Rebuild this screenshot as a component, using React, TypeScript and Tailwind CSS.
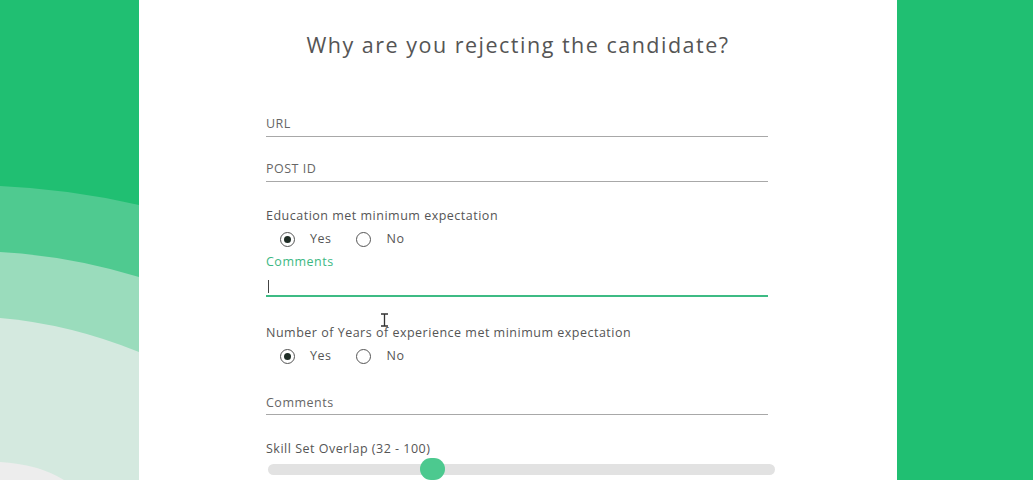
import { useState } from "react";

function Waves() {
	return (
		<svg width="139" height="480" viewBox="0 0 139 480" className="block">
			<rect width="139" height="480" fill="#20bf72" />
			<path d="M0,186 Q70,189 139,205 L139,480 L0,480 Z" fill="#4fca90" />
			<path d="M0,252 Q70,256 139,277 L139,480 L0,480 Z" fill="#9adcbc" />
			<path d="M0,318 Q70,324 139,352 L139,480 L0,480 Z" fill="#d4e9df" />
			<path d="M0,462 Q38,464 64,480 L0,480 Z" fill="#ededed" />
		</svg>
	);
}

function Radio({ checked, label }: { checked: boolean; label: string }) {
	return (
		<label className="flex items-center gap-[15px]">
			<span className="flex h-[15px] w-[15px] items-center justify-center rounded-full border-[1.5px] border-[#555]">
				{checked ? (
					<span className="h-[7px] w-[7px] rounded-full bg-[#1f2d26]" />
				) : null}
			</span>
			<span className="text-[12.5px] tracking-[0.5px] text-[#555]">{label}</span>
		</label>
	);
}

function Field({ label }: { label: string }) {
	return (
		<div className="h-[45px] pt-[8px]">
			<div className="border-b-[1.5px] border-[#a8a8a8] pb-[2px] text-[12.5px] tracking-[0.5px] text-[#666]">
				{label}
			</div>
		</div>
	);
}

function YesNo({ label }: { label: string }) {
	return (
		<div>
			<div className="text-[12.5px] leading-[18px] tracking-[0.5px] text-[#555]">
				{label}
			</div>
			<div className="mt-[5px] flex items-center gap-[25px] pl-[14px]">
				<Radio checked label="Yes" />
				<Radio checked={false} label="No" />
			</div>
		</div>
	);
}

export default function App() {
	const [skill] = useState(32);
	const thumbLeft = 152 + (skill - 32) * 0;

	return (
		<div
			className="flex h-[480px] w-[1033px] overflow-hidden bg-[#20bf72]"
			style={{ fontFamily: "'Open Sans', Lato, sans-serif" }}
		>
			<Waves />
			<div className="relative h-[480px] w-[758px] bg-white">
				<h1 className="pt-[30px] text-center text-[21.5px] leading-[30px] tracking-[1.5px] text-[#555]">
					Why are you rejecting the candidate?
				</h1>
				<div className="ml-[127px] mt-[47px] w-[502px]">
					<Field label="URL" />
					<Field label="POST ID" />
					<div className="mt-[10px]">
						<YesNo label="Education met minimum expectation" />
					</div>
					<div className="mt-[4px] text-[12.5px] leading-[18px] tracking-[0.5px] text-[#3db883]">
						Comments
					</div>
					<div className="mt-[8px] flex h-[18px] items-end border-b-2 border-[#3dbb84] pb-[2px]">
						<span className="ml-[2px] h-[13px] w-px bg-[#444]" />
					</div>
					<div className="mt-[27px]">
						<YesNo label="Number of Years of experience met minimum expectation" />
					</div>
					<div className="mt-[28px] border-b-[1.5px] border-[#a8a8a8] pb-[2px] text-[12.5px] tracking-[0.5px] text-[#666]">
						Comments
					</div>
					<div className="mt-[25px] text-[12.5px] leading-[18px] tracking-[0.5px] text-[#555]">
						Skill Set Overlap (32 - 100)
					</div>
					<div className="relative mt-[6px] ml-[2px] h-[11px] w-[507px] rounded-full bg-[#e2e2e2]">
						<span
							className="absolute top-[-6px] h-[22px] w-[25px] rounded-full bg-[#4cc98f]"
							style={{ left: thumbLeft }}
						/>
					</div>
				</div>
				<svg
					className="absolute left-[241px] top-[313px]"
					width="9"
					height="14"
					viewBox="0 0 9 14"
				>
					<path
						d="M1,1 H8 M4.5,1 V13 M1,13 H8"
						stroke="#333"
						strokeWidth="1.3"
						fill="none"
					/>
				</svg>
			</div>
		</div>
	);
}
